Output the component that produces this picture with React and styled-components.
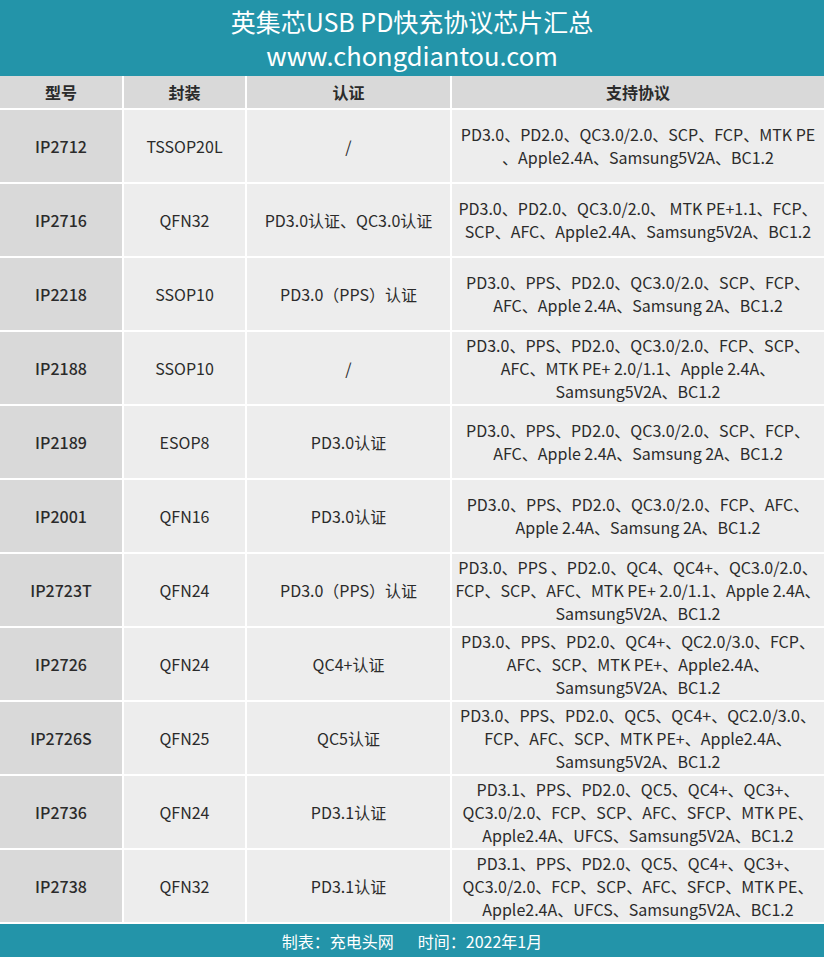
import React from "react";
import styled, { createGlobalStyle } from "styled-components";

const GlobalStyle = createGlobalStyle`
  body {
    margin: 0;
    background: #ffffff;
    font-family: "Noto Sans CJK SC", "Noto Sans", sans-serif;
    color: #2b2b2b;
  }
`;

const Page = styled.div`
  width: 824px;
  display: flex;
  flex-direction: column;
`;

const Banner = styled.header`
  background-color: #2394a9;
  color: #ffffff;
  height: 76px;
  display: flex;
  flex-direction: column;
  align-items: center;
  justify-content: center;
`;

const BannerLine = styled.div`
  font-size: ${(props) => props.size || 25}px;
  line-height: 33px;
`;

const Table = styled.div`
  display: grid;
  grid-template-columns: 122px 121px 203px 1fr;
  grid-auto-rows: 72px;
  grid-template-rows: 32px;
  gap: 2px;
  background: #ffffff;
  padding-bottom: 2px;
`;

const HeadCell = styled.div`
  background: #d9d9d9;
  display: flex;
  align-items: center;
  justify-content: center;
  font-size: 16px;
  font-weight: bold;
`;

const Cell = styled.div`
  background: ${(props) => (props.dark ? "#d9d9d9" : "#ededed")};
  display: flex;
  align-items: center;
  justify-content: center;
  text-align: center;
  font-size: 16px;
  line-height: 23px;
  font-weight: ${(props) => (props.bold ? 500 : 400)};
  white-space: nowrap;
`;

const Footer = styled.footer`
  background-color: #2394a9;
  color: #ffffff;
  height: 33px;
  display: flex;
  align-items: center;
  justify-content: center;
  font-size: 16px;
  gap: 24px;
`;

const rows = [
  ["IP2712", "TSSOP20L", "/", ["PD3.0、PD2.0、QC3.0/2.0、SCP、FCP、MTK PE", "、Apple2.4A、Samsung5V2A、BC1.2"]],
  ["IP2716", "QFN32", "PD3.0认证、QC3.0认证", ["PD3.0、PD2.0、QC3.0/2.0、 MTK PE+1.1、FCP、", "SCP、AFC、Apple2.4A、Samsung5V2A、BC1.2"]],
  ["IP2218", "SSOP10", "PD3.0（PPS）认证", ["PD3.0、PPS、PD2.0、QC3.0/2.0、SCP、FCP、", "AFC、Apple 2.4A、Samsung 2A、BC1.2"]],
  ["IP2188", "SSOP10", "/", ["PD3.0、PPS、PD2.0、QC3.0/2.0、FCP、SCP、", "AFC、MTK PE+ 2.0/1.1、Apple 2.4A、", "Samsung5V2A、BC1.2"]],
  ["IP2189", "ESOP8", "PD3.0认证", ["PD3.0、PPS、PD2.0、QC3.0/2.0、SCP、FCP、", "AFC、Apple 2.4A、Samsung 2A、BC1.2"]],
  ["IP2001", "QFN16", "PD3.0认证", ["PD3.0、PPS、PD2.0、QC3.0/2.0、FCP、AFC、", "Apple 2.4A、Samsung 2A、BC1.2"]],
  ["IP2723T", "QFN24", "PD3.0（PPS）认证", ["PD3.0、PPS 、PD2.0、QC4、QC4+、QC3.0/2.0、", "FCP、SCP、AFC、MTK PE+ 2.0/1.1、Apple 2.4A、", "Samsung5V2A、BC1.2"]],
  ["IP2726", "QFN24", "QC4+认证", ["PD3.0、PPS、PD2.0、QC4+、QC2.0/3.0、FCP、", "AFC、SCP、MTK PE+、Apple2.4A、", "Samsung5V2A、BC1.2"]],
  ["IP2726S", "QFN25", "QC5认证", ["PD3.0、PPS、PD2.0、QC5、QC4+、QC2.0/3.0、", "FCP、AFC、SCP、MTK PE+、Apple2.4A、", "Samsung5V2A、BC1.2"]],
  ["IP2736", "QFN24", "PD3.1认证", ["PD3.1、PPS、PD2.0、QC5、QC4+、QC3+、", "QC3.0/2.0、FCP、SCP、AFC、SFCP、MTK PE、", "Apple2.4A、UFCS、Samsung5V2A、BC1.2"]],
  ["IP2738", "QFN32", "PD3.1认证", ["PD3.1、PPS、PD2.0、QC5、QC4+、QC3+、", "QC3.0/2.0、FCP、SCP、AFC、SFCP、MTK PE、", "Apple2.4A、UFCS、Samsung5V2A、BC1.2"]],
];

export default function App() {
  return (
    <Page>
      <GlobalStyle />
      <Banner>
        <BannerLine size={25}>英集芯USB PD快充协议芯片汇总</BannerLine>
        <BannerLine size={25.5}>www.chongdiantou.com</BannerLine>
      </Banner>
      <Table>
        <HeadCell>型号</HeadCell>
        <HeadCell>封装</HeadCell>
        <HeadCell>认证</HeadCell>
        <HeadCell>支持协议</HeadCell>
        {rows.map(([model, pkg, cert, protocols]) => (
          <React.Fragment key={model}>
            <Cell dark bold>{model}</Cell>
            <Cell>{pkg}</Cell>
            <Cell>{cert}</Cell>
            <Cell>
              <div>
                {protocols.map((line, i) => (
                  <div key={i}>{line}</div>
                ))}
              </div>
            </Cell>
          </React.Fragment>
        ))}
      </Table>
      <Footer>
        <span>制表：充电头网</span>
        <span>时间：2022年1月</span>
      </Footer>
    </Page>
  );
}
